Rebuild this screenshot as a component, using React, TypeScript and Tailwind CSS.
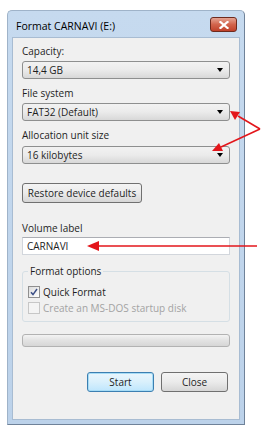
import React from 'react';

function ComboBox({ value }: { value: string }) {
  return (
    <div className="h-[18px] rounded-[3px] border border-[#8e8f8f] bg-gradient-to-b from-[#f2f2f2] via-[#ebebeb] to-[#d8d8d8] flex items-center justify-between pl-[4px] pr-[6px]">
      <span className="leading-none">{value}</span>
      <span className="w-0 h-0 border-l-[3.5px] border-r-[3.5px] border-t-[4px] border-l-transparent border-r-transparent border-t-black" />
    </div>
  );
}

function Label({ children }: { children: React.ReactNode }) {
  return <div className="h-[14px] leading-[14px]">{children}</div>;
}

export default function App() {
  return (
    <div className="relative w-[263px] h-[433px] bg-white overflow-hidden text-[10px] text-[#1e1e1e] whitespace-nowrap" style={{ fontFamily: '"Open Sans", "Noto Sans", sans-serif' }}>
      <div className="pl-[7px] pt-[10px]">
        {/* Window frame */}
        <div className="w-[238px] h-[415px] rounded-t-[5px] border border-[#6f8299] border-l-[#9fb3c9] border-t-[#9fb3c9] bg-gradient-to-b from-[#c6daef] to-[#bcd2ea] flex flex-col px-[4px] pb-[4px]">
          {/* Title bar */}
          <div className="h-[26px] flex items-start justify-between shrink-0">
            <div className="pl-[4px] pt-[8px] text-[10.5px] leading-[14px] text-black">Format CARNAVI (E:)</div>
            <div className="mt-[6px] mr-[3px] w-[27px] h-[15px] rounded-[3px] border border-[#6e2a1e] bg-gradient-to-b from-[#e4a393] via-[#d2644c] to-[#c0412a] flex items-center justify-center">
              <svg width="10" height="8" viewBox="0 0 10 8">
                <path d="M1.5 1 L8.5 7 M8.5 1 L1.5 7" stroke="#ffffff" strokeWidth="2.2" strokeLinecap="square" />
              </svg>
            </div>
          </div>

          {/* Client area */}
          <div className="flex-1 bg-[#f0f0f0] border border-[#a8bcd2] px-[9px] flex flex-col">
            <div className="mt-[6px]"><Label>Capacity:</Label></div>
            <div className="mt-[3px]"><ComboBox value="14,4 GB" /></div>

            <div className="mt-[7px]"><Label>File system</Label></div>
            <div className="mt-[3px]"><ComboBox value="FAT32 (Default)" /></div>

            <div className="mt-[7px]"><Label>Allocation unit size</Label></div>
            <div className="mt-[4px]"><ComboBox value="16 kilobytes" /></div>

            <div className="mt-[19px]">
              <div className="w-[120px] h-[20px] rounded-[3px] border border-[#707070] bg-gradient-to-b from-[#f4f4f4] via-[#ebebeb] to-[#d6d6d6] flex items-center justify-center">
                Restore device defaults
              </div>
            </div>

            <div className="mt-[18px]"><Label>Volume label</Label></div>
            <div className="mt-[2px] h-[18px] border border-[#d2d6dc] border-t-[#abadb3] bg-white flex items-center pl-[4px]">CARNAVI</div>

            {/* Format options group */}
            <div className="mt-[16px] relative h-[51px] rounded-[3px] border border-[#d5dfe5] px-[5px] pt-[13px]">
              <div className="absolute left-[5px] top-[-8px] px-[2px] bg-[#f0f0f0] leading-[14px]">Format options</div>
              <div className="flex items-center gap-[3px] h-[13px]">
                <div className="w-[12px] h-[12px] border border-[#8f8f8f] bg-gradient-to-br from-[#dcdcdc] to-white flex items-center justify-center">
                  <svg width="8" height="8" viewBox="0 0 8 8">
                    <path d="M1 4.2 L3 6.6 L7 1" fill="none" stroke="#3c4f86" strokeWidth="1.5" />
                  </svg>
                </div>
                <span className="leading-none">Quick Format</span>
              </div>
              <div className="flex items-center gap-[3px] h-[13px] mt-[3px]">
                <div className="w-[12px] h-[12px] border border-[#c7c7c7] bg-[#f4f4f4]" />
                <span className="leading-none text-[#a3a3a3]">Create an MS-DOS startup disk</span>
              </div>
            </div>

            {/* Progress bar */}
            <div className="mt-[12px] h-[13px] rounded-[3px] border border-[#b2b2b2] bg-gradient-to-b from-[#f3f3f3] via-[#e2e2e2] to-[#d6d6d6]" />

            {/* Buttons */}
            <div className="mt-[25px] flex justify-end gap-[7px] pr-[2px]">
              <div className="w-[67px] h-[20px] rounded-[3px] border border-[#3c7fb1] bg-gradient-to-b from-[#eaf6fd] via-[#d9f0fc] to-[#bee6fd] flex items-center justify-center shadow-[inset_0_0_0_1px_#a6dcf6]">
                Start
              </div>
              <div className="w-[67px] h-[20px] rounded-[3px] border border-[#707070] bg-gradient-to-b from-[#f4f4f4] via-[#ebebeb] to-[#d6d6d6] flex items-center justify-center">
                Close
              </div>
            </div>
          </div>
        </div>
      </div>

      {/* Red annotation arrows */}
      <svg className="absolute left-0 top-0 pointer-events-none" width="263" height="433" viewBox="0 0 263 433">
        <g stroke="#e3161b" strokeWidth="1.6" fill="#e3161b">
          <line x1="260" y1="129" x2="238" y2="116" />
          <polygon points="230,111 240,112 235,120" stroke="none" />
          <line x1="260" y1="129" x2="221" y2="147" />
          <polygon points="212,151 219,143 223,151" stroke="none" />
          <line x1="257" y1="246" x2="97" y2="246" />
          <polygon points="87,246 99,241 99,251" stroke="none" />
        </g>
      </svg>
    </div>
  );
}
